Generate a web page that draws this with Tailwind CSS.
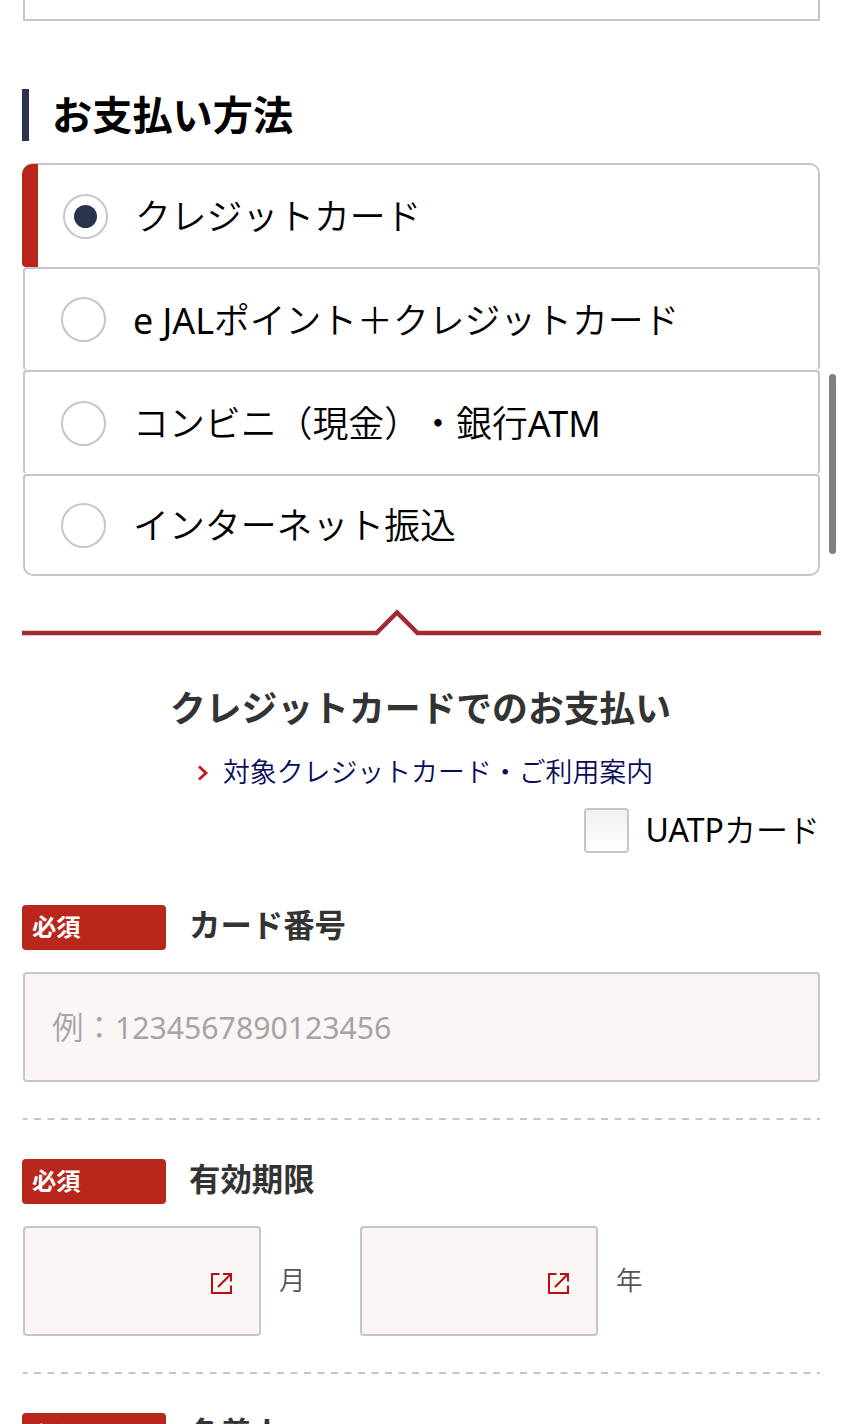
<!DOCTYPE html>
<html lang="ja">

<head>
  <meta charset="UTF-8">
  <meta name="viewport" content="width=device-width, initial-scale=1.0">
  <title>お支払い方法</title>
  <script src="https://cdn.jsdelivr.net/npm/@tailwindcss/browser@4"></script>
</head>

<body class="bg-white text-black font-['Noto_Sans','Noto_Sans_CJK_JP',sans-serif] [text-spacing-trim:space-all]">
  <main class="relative w-[843px] h-[1424px] overflow-hidden px-[23px]">
    <div class="h-[21px] border-2 border-t-0 border-[#c6c6c6]"></div>

    <h1 class="-ml-px mt-[68px] h-[52px] flex items-center border-l-7 border-[#2a334d] pl-[23px] text-[40.200px] leading-[52px] font-bold">お支払い方法</h1>

    <!-- Payment methods -->
    <div class="mt-[22px] leading-[50px] text-[36px]">
      <label class="relative flex items-center h-[104px] pl-[38px] border-2 border-b-0 border-[#c6c6c6] rounded-t-[10px] rounded-b-[4px]">
        <span class="absolute -left-[3px] -top-px bottom-0 w-4 bg-[#b9261b] rounded-tl-[10px] rounded-bl-[4px]"></span>
        <span class="size-[45px] flex items-center justify-center rounded-full border-2 border-[#c6c6c6]"><span class="size-[23px] rounded-full bg-[#2a334d]"></span></span>
        <span class="ml-[27px] mb-[4px] font-['Noto_Sans_CJK_JP'] font-[350] text-[35.800px]">クレジットカード</span>
      </label>
      <label class="flex items-center h-[103px] pl-[36px] border-2 border-b-0 border-[#c6c6c6] rounded-[4px]">
        <span class="size-[45px] rounded-full border-2 border-[#c6c6c6]"></span>
        <span class="ml-[27px] font-[350] text-[35.800px]"><span class="font-normal">e JAL</span>ポイント＋クレジットカード</span>
      </label>
      <label class="flex items-center h-[104px] pl-[36px] border-2 border-b-0 border-[#c6c6c6] rounded-[4px]">
        <span class="size-[45px] rounded-full border-2 border-[#c6c6c6]"></span>
        <span class="ml-[27px] mt-[2px] font-[350] text-[35.900px]">コンビニ（現金）・銀行<span class="font-normal">ATM</span></span>
      </label>
      <label class="flex items-center h-[102px] pl-[36px] border-2 border-[#c6c6c6] rounded-t-[4px] rounded-b-[10px]">
        <span class="size-[45px] rounded-full border-2 border-[#c6c6c6]"></span>
        <span class="ml-[27px] mt-[2px] font-[350] text-[35.900px]">インターネット振込</span>
      </label>
    </div>

    <svg class="block -ml-px mt-[32px] w-[799px] h-[28px]" viewBox="0 0 799 28" fill="none" stroke="#a02b32" stroke-width="4.500">
      <path d="M0 25h354.500L375 4.500L395.500 25H799" />
    </svg>

    <h2 class="-ml-[2px] mt-[42px] text-center text-[35.800px] leading-[56px] font-bold text-[#333] font-['Noto_Sans_CJK_JP']">クレジットカードでのお支払い</h2>
    <a class="mt-[17px] flex items-center justify-center h-[40px] pl-[7px] text-[26.900px] font-[350] text-[#0b0b5c] font-['Noto_Sans_CJK_JP']">
      <svg class="mr-[14px] mt-[3px] w-[12px] h-[16px]" viewBox="0 0 12 16" fill="none" stroke="#c01818" stroke-width="2.800"><path d="M2 1.500L9 8L2 14.500" /></svg>
      対象クレジットカード・ご利用案内
    </a>
    <label class="mt-[17px] flex items-center justify-end h-[45px] text-[32px]">
      <span class="size-[45px] border-2 border-[#c6c6c6] rounded-[4px] bg-linear-to-b from-[#f0f0ee] to-white"></span>
      <span class="ml-[17px] -mt-[1px] font-[350]"><span class="font-normal">UATP</span>カード</span>
    </label>

    <!-- Card number -->
    <div class="-ml-px mt-[52px] flex h-[45px]">
      <span class="w-[144px] pl-[10px] rounded-[4px] bg-[#b9261b] text-white text-[24.300px] leading-[44px] font-bold">必須</span>
      <span class="ml-[23px] text-[31.400px] leading-[40px] font-bold text-[#333]">カード番号</span>
    </div>
    <div class="mt-[22px] flex items-center h-[110px] pl-[27px] border-2 border-[#c6c6c6] rounded-[4px] bg-[#fbf5f5] text-[#a4a4a4]">
      <span class="text-[31.500px] font-[350] mb-px">例：</span>
      <span class="mt-[2px] text-[30.200px]">1234567890123456</span>
    </div>

    <svg class="block mt-[36px] w-full h-[2px]" stroke="#c6c6c6" stroke-width="2"><path d="M0 1H798" stroke-dasharray="7 6.500" stroke-dashoffset="2.500" /></svg>

    <!-- Expiry -->
    <div class="-ml-px mt-[39px] flex h-[45px]">
      <span class="w-[144px] pl-[10px] rounded-[4px] bg-[#b9261b] text-white text-[24.300px] leading-[44px] font-bold">必須</span>
      <span class="ml-[23px] text-[31.400px] leading-[40px] font-bold text-[#333]">有効期限</span>
    </div>
    <div class="mt-[22px] flex items-center h-[110px] text-[26.500px] font-[350] text-[#555]">
      <span class="flex items-center justify-end w-[238px] h-full pr-[27px] border-2 border-[#c6c6c6] rounded-[4px] bg-[#fbf5f5]">
        <svg class="mt-[4px] size-[21px]" viewBox="0 0 21 21" fill="none" stroke="#b80f0f" stroke-width="2"><path d="M8.500 1H1V20H20V12.500M12 1H20V8.500M19.500 1.500L7 14" /></svg>
      </span>
      <span class="ml-[18px] w-[81px]">月</span>
      <span class="flex items-center justify-end w-[238px] h-full pr-[27px] border-2 border-[#c6c6c6] rounded-[4px] bg-[#fbf5f5]">
        <svg class="mt-[4px] size-[21px]" viewBox="0 0 21 21" fill="none" stroke="#b80f0f" stroke-width="2"><path d="M8.500 1H1V20H20V12.500M12 1H20V8.500M19.500 1.500L7 14" /></svg>
      </span>
      <span class="ml-[18px]">年</span>
    </div>

    <svg class="block mt-[36px] w-full h-[2px]" stroke="#c6c6c6" stroke-width="2"><path d="M0 1H798" stroke-dasharray="7 6.500" stroke-dashoffset="2.500" /></svg>

    <!-- Card holder -->
    <div class="-ml-px mt-[39px] flex h-[45px]">
      <span class="w-[144px] pl-[10px] rounded-[4px] bg-[#b9261b] text-white text-[24.300px] leading-[44px] font-bold">必須</span>
      <span class="ml-[23px] text-[31.400px] leading-[40px] font-bold text-[#333]">名義人</span>
    </div>

    <!-- Scroll indicator -->
    <div class="absolute left-[829px] top-[374px] w-[7px] h-[180px] rounded-full bg-[#7f7f7f]"></div>
  </main>
</body>

</html>
